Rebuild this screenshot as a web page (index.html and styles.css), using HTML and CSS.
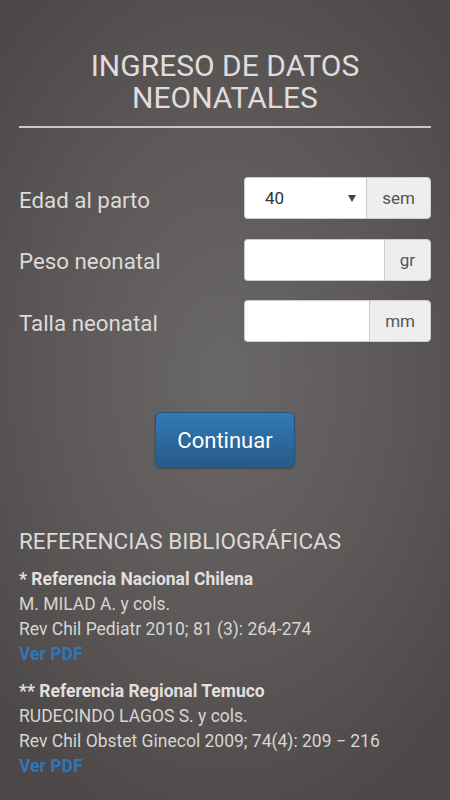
FILE: index.html
```html
<!DOCTYPE html>
<html lang="es">
<head>
<meta charset="utf-8">
<title>Ingreso de datos neonatales</title>
<link rel="stylesheet" href="styles.css">
</head>
<body>
    <div class="page">
        <h1 class="title">INGRESO DE DATOS<br>NEONATALES</h1>
        <hr class="rule">

        <form class="form">
            <div class="row">
                <label class="label" for="edad">Edad al parto</label>
                <div class="group">
                    <div class="select" id="edad">
                        <span>40</span>
                        <span class="caret"></span>
                    </div>
                    <span class="addon">sem</span>
                </div>
            </div>
            <div class="row">
                <label class="label" for="peso">Peso neonatal</label>
                <div class="group">
                    <input class="input" type="number" id="peso">
                    <span class="addon">gr</span>
                </div>
            </div>
            <div class="row">
                <label class="label" for="talla">Talla neonatal</label>
                <div class="group">
                    <input class="input" type="number" id="talla">
                    <span class="addon">mm</span>
                </div>
            </div>

            <div class="actions">
                <button type="button" class="btn">Continuar</button>
            </div>
        </form>

        <h2 class="refs-title">REFERENCIAS BIBLIOGRÁFICAS</h2>
        <div class="ref">
            <p><b>* Referencia Nacional Chilena</b></p>
            <p>M. MILAD A. y cols.</p>
            <p>Rev Chil Pediatr 2010; 81 (3): 264-274</p>
            <p><a href="#" class="pdf">Ver PDF</a></p>
        </div>
        <div class="ref">
            <p><b>** Referencia Regional Temuco</b></p>
            <p>RUDECINDO LAGOS S. y cols.</p>
            <p>Rev Chil Obstet Ginecol 2009; 74(4): 209 &minus; 216</p>
            <p><a href="#" class="pdf">Ver PDF</a></p>
        </div>
    </div>
</body>
</html>
```

FILE: styles.css
```css
html, body {
    margin: 0;
    height: 100%;
}
body {
    font-family: Roboto, "Liberation Sans", sans-serif;
    color: #dedad9;
    background: radial-gradient(ellipse 70% 60% at 50% 47%, #6a6767 0%, #5b5857 55%, #4b4847 100%);
    background-color: #4b4847;
}
.page {
    padding: 50px 19px 0;
}
.title {
    margin: 0;
    font-size: 30px;
    line-height: 32px;
    font-weight: 400;
    text-align: center;
    color: #e0dcdb;
}
.rule {
    margin: 12px 0 0;
    border: 0;
    height: 2px;
    background: #cac7c6;
}

.form {
    margin-top: 49px;
}
.row {
    display: flex;
    align-items: center;
    height: 42px;
    margin-bottom: 19.5px;
}
.label {
    flex: 1;
    padding-top: 3px;
    font-size: 22.3px;
    color: #dedad9;
}
.group {
    display: flex;
    width: 187px;
    height: 42px;
}
.select, .input {
    flex: 1;
    min-width: 0;
    box-sizing: border-box;
    height: 42px;
    background: #fff;
    border: 1px solid #ccc;
    border-right: 0;
    border-radius: 4px 0 0 4px;
    font: 17px Roboto, "Liberation Sans", sans-serif;
    color: #333;
}
.select {
    display: flex;
    align-items: center;
    justify-content: space-between;
    padding: 0 10px 0 20px;
}
.caret {
    width: 0;
    height: 0;
    border-left: 4px solid transparent;
    border-right: 4px solid transparent;
    border-top: 7px solid #444;
}
.input {
    padding: 0 12px;
    outline: none;
}
.addon {
    display: flex;
    align-items: center;
    padding: 0 15px;
    background: #eee;
    border: 1px solid #ccc;
    border-radius: 0 4px 4px 0;
    font-size: 17px;
    color: #555;
}

.actions {
    margin-top: 70px;
    text-align: center;
}
.btn {
    height: 56px;
    padding: 0 21px;
    font: 22px Roboto, "Liberation Sans", sans-serif;
    color: #fff;
    background: linear-gradient(#337ab7, #265a88);
    border: 1px solid #245580;
    border-radius: 6px;
    box-shadow: 0 1px 2px rgba(0, 0, 0, 0.25);
}

.refs-title {
    margin: 58px 0 11px;
    font-size: 22.5px;
    line-height: 30px;
    font-weight: 400;
    color: #dcd9d8;
}
.ref {
    margin-bottom: 12px;
}
.ref p {
    margin: 0;
    font-size: 17.5px;
    line-height: 25px;
    color: #d8d5d4;
}
.ref b {
    color: #e2dfde;
}
.pdf {
    font-weight: 700;
    color: #2f77b6;
    text-decoration: none;
}
```
